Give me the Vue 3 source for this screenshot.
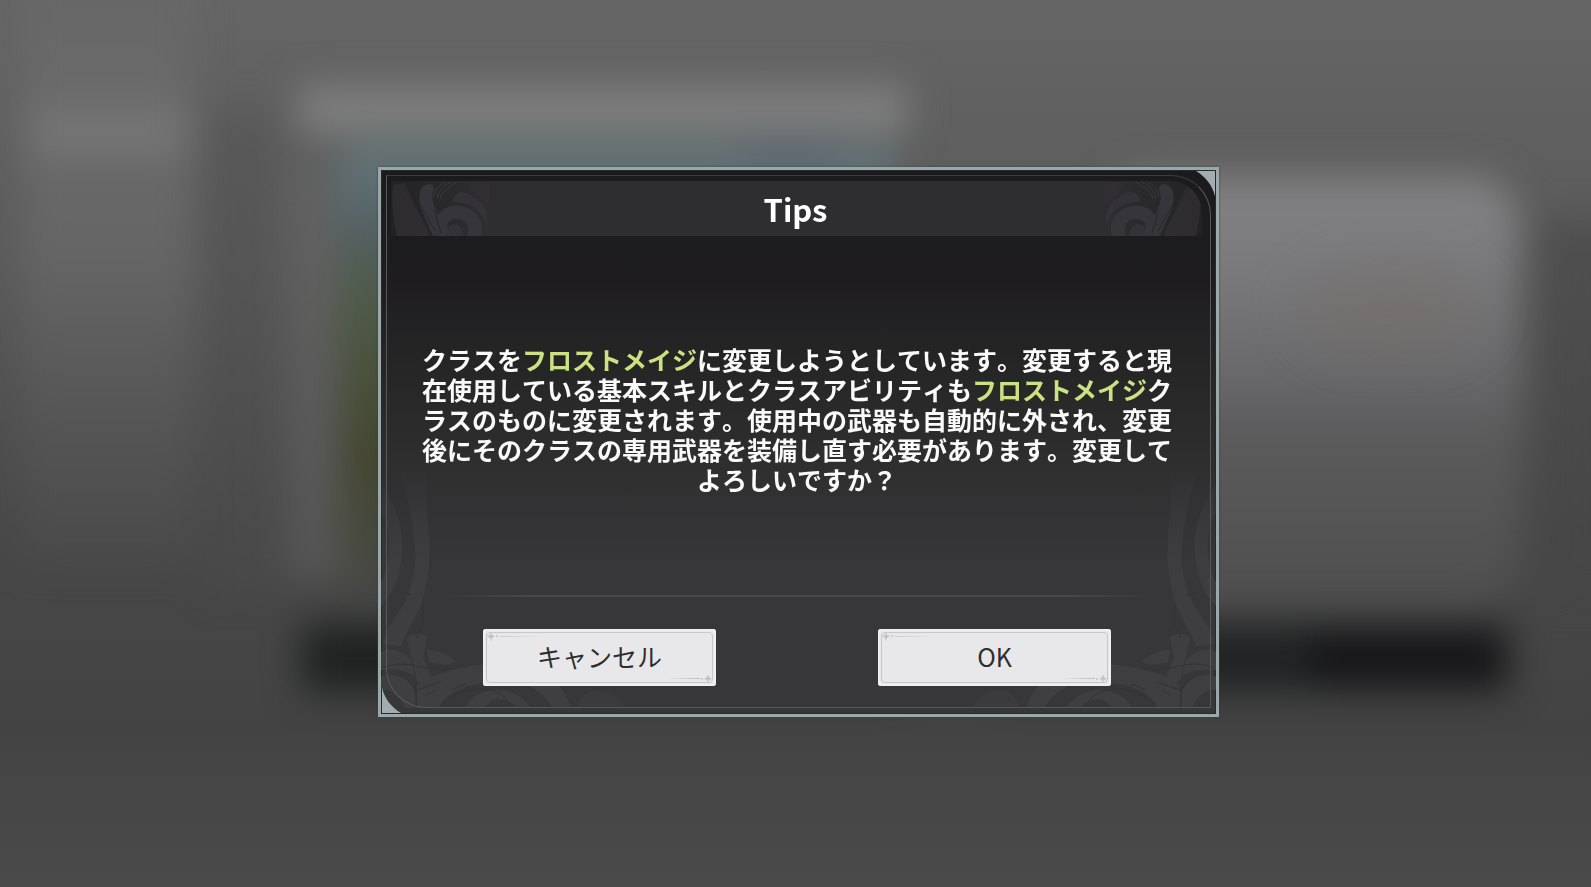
<script setup>
const className = 'フロストメイジ'
const actions = [
  { id: 'cancel', label: 'キャンセル' },
  { id: 'ok', label: 'OK' },
]
</script>

<template>
  <main class="screen">
    <!-- out-of-focus class screen behind the dialog -->
    <svg class="scene" viewBox="0 0 1591 887" preserveAspectRatio="none" aria-hidden="true">
      <defs>
        <linearGradient id="base" x1="0" y1="0" x2="0" y2="1">
          <stop offset="0" stop-color="#656565" />
          <stop offset=".3" stop-color="#5a5a5a" />
          <stop offset=".6" stop-color="#484848" />
          <stop offset=".82" stop-color="#434343" />
          <stop offset="1" stop-color="#4a4a4a" />
        </linearGradient>
        <linearGradient id="side" x1="0" y1="0" x2="0" y2="1">
          <stop offset="0" stop-color="#666666" />
          <stop offset=".25" stop-color="#6a6a6a" />
          <stop offset=".5" stop-color="#666666" />
          <stop offset=".75" stop-color="#575757" />
          <stop offset="1" stop-color="#4a4a4a" />
        </linearGradient>
        <linearGradient id="panel" x1="0" y1="0" x2="0" y2="1">
          <stop offset="0" stop-color="#838385" />
          <stop offset=".22" stop-color="#7a7a7c" />
          <stop offset=".45" stop-color="#6a6a6c" />
          <stop offset=".6" stop-color="#5b5b5c" />
          <stop offset="1" stop-color="#4f4f50" />
        </linearGradient>
        <linearGradient id="art" x1="0" y1="0" x2="0" y2="1">
          <stop offset="0" stop-color="#667979" />
          <stop offset=".12" stop-color="#5a6970" />
          <stop offset=".22" stop-color="#525e5c" />
          <stop offset=".38" stop-color="#4d5944" />
          <stop offset=".7" stop-color="#444630" />
          <stop offset="1" stop-color="#474943" />
        </linearGradient>
        <filter id="soft" x="-20%" y="-50%" width="140%" height="200%" color-interpolation-filters="sRGB">
          <feGaussianBlur stdDeviation="18" />
        </filter>
        <filter id="softer" x="-50%" y="-50%" width="200%" height="200%" color-interpolation-filters="sRGB">
          <feGaussianBlur stdDeviation="26" />
        </filter>
      </defs>
      <rect width="1591" height="887" fill="url(#base)" />
      <g filter="url(#soft)">
        <rect x="22" y="-60" width="170" height="620" fill="url(#side)" />
        <rect x="28" y="108" width="162" height="48" fill="#757575" />
        <rect x="206" y="110" width="70" height="480" fill="#4e4e4e" opacity=".4" />
        <rect x="286" y="170" width="60" height="410" fill="#666666" opacity=".5" />
        <rect x="340" y="146" width="554" height="436" fill="url(#art)" />
        <rect x="740" y="146" width="100" height="24" fill="#5b6c76" />
        <rect x="298" y="84" width="610" height="50" fill="#7e7e7e" />
        <rect x="1100" y="176" width="420" height="430" rx="50" fill="url(#panel)" />
        <rect x="302" y="624" width="600" height="68" fill="#202121" />
        <rect x="1000" y="624" width="508" height="68" fill="#222324" />
        <rect x="1310" y="634" width="196" height="50" fill="#161618" />
        <rect x="1536" y="220" width="90" height="380" fill="#464646" opacity=".6" />
      </g>
      <ellipse cx="1390" cy="310" rx="90" ry="44" fill="#756e6a" opacity=".5" filter="url(#softer)" />
    </svg>

    <section class="dialog" role="dialog" aria-modal="true" aria-labelledby="dialog-title" aria-describedby="dialog-text">
      <!-- scrollwork engraved along the lower corners -->
      <svg
        v-for="side in ['left', 'right']"
        :key="side"
        class="carving"
        :class="side"
        viewBox="0 0 270 260"
        aria-hidden="true"
      >
        <defs>
          <linearGradient :id="'carve-' + side" gradientUnits="userSpaceOnUse" x1="0" y1="10" x2="0" y2="260">
            <stop offset="0" stop-color="#3f3f42" stop-opacity="0" />
            <stop offset=".4" stop-color="#3f3f42" stop-opacity=".8" />
            <stop offset="1" stop-color="#3f3f42" />
          </linearGradient>
        </defs>
        <g :fill="'url(#carve-' + side + ')'">
          <path d="M18 18H46C44 40 46 60 48 84C50 110 46 130 40 150C34 166 26 176 20 192L2 190C4 180 8 172 14 164C30 142 36 118 34 92C32 64 26 38 18 18Z" />
          <path d="M0 30C18 54 24 82 20 108C17 128 10 142 0 152V128C10 112 12 76 0 58Z" />
          <path d="M26 184C32 178 40 180 46 182L42 204L50 222C48 230 38 232 36 226Z" />
          <path d="M46 196C58 196 70 202 74 208C66 212 56 210 48 208Z" />
          <path d="M0 198C10 192 22 198 30 206L34 222C22 214 10 216 0 216Z" />
          <path d="M36 232C60 214 90 212 124 208C160 208 180 226 190 254H172C158 232 140 226 120 228C90 228 66 236 58 254H36Z" />
          <path d="M84 254C94 232 132 228 150 254H136C126 242 110 242 104 254Z" />
          <path d="M0 222C16 218 30 226 34 238V254H24C18 240 8 234 0 236Z" />
          <path d="M196 254C202 232 230 228 244 254Z" opacity=".5" />
        </g>
        <g fill="none" stroke="#333336">
          <path d="M2 214C30 202 48 222 74 214M20 218L36 236L60 228M36 252L34 232M60 252C80 228 120 230 130 252M20 138L30 141M42 150V170L35 184M70 236L84 230L92 238M44 242L54 236" />
        </g>
      </svg>

      <span class="frame" aria-hidden="true"></span>
      <svg class="corner top-right" viewBox="0 0 19 25" aria-hidden="true">
        <path d="M0 0H19V25C16 14 10 6 0 0Z" fill="#a3adb1" />
      </svg>
      <svg class="corner bottom-left" viewBox="0 0 19 25" aria-hidden="true">
        <path d="M0 0V25H19C9 19 3 11 0 0Z" fill="#a3adb1" />
      </svg>

      <header class="heading">
        <svg
          v-for="side in ['left', 'right']"
          :key="side"
          class="flourish"
          :class="side"
          viewBox="0 0 100 55"
          aria-hidden="true"
        >
          <g fill="#363539">
            <path d="M2 4L14 2C20 18 32 36 38 55H6C2 38 0 20 2 4Z" opacity=".55" />
            <path d="M30 8C36 0 46 2 42 12C40 20 44 26 46 32L50 42L54 55H42C36 38 24 24 30 8Z" />
            <path d="M46 40C46 28 60 22 74 26C88 30 94 44 90 55H76C80 44 74 38 66 38C58 38 54 44 58 50L62 55H52C48 50 46 46 46 40Z" />
            <path d="M62 18C66 8 76 10 82 16C92 20 98 32 96 44C90 28 80 22 62 21Z" opacity=".8" />
            <path d="M78 2H98V24C90 18 80 12 78 2Z" opacity=".35" />
            <path d="M57 46C64 40 72 44 73 55H60Z" opacity=".8" />
          </g>
          <g fill="none" stroke="#3c3a3f">
            <path d="M46 18C48 8 54 4 60 1M49 18C51 10 58 6 66 1M43 16C44 8 50 3 54 1" />
          </g>
          <g fill="none" stroke="#29282b">
            <path d="M14 8L41 55M26 18L44 50M43 28L50 52" />
          </g>
        </svg>
        <h1 id="dialog-title">Tips</h1>
      </header>

      <div class="body">
        <p id="dialog-text">クラスを<em>{{ className }}</em>に変更しようとしています。変更すると現在使用している基本スキルとクラスアビリティも<em>{{ className }}</em>クラスのものに変更されます。使用中の武器も自動的に外され、変更後にそのクラスの専用武器を装備し直す必要があります。変更してよろしいですか？</p>
      </div>

      <hr class="rule" />

      <footer class="actions">
        <button v-for="action in actions" :key="action.id" type="button" class="action">
          <svg class="spark start" viewBox="0 0 56 9" aria-hidden="true">
            <defs>
              <linearGradient :id="'ray-' + action.id" x1="0" x2="1">
                <stop offset="0" stop-color="#b9b9bc" />
                <stop offset="1" stop-color="#b9b9bc" stop-opacity="0" />
              </linearGradient>
            </defs>
            <path d="M4 0L5 3L8 4L5 6L4 9L3 6L0 4L3 3Z" fill="#c3c3c6" />
            <circle cx="10" cy="4" r="1" fill="#c3c3c6" />
            <rect x="13" y="4" width="43" height="1" :fill="'url(#ray-' + action.id + ')'" opacity=".6" />
          </svg>
          <span>{{ action.label }}</span>
          <svg class="spark end" viewBox="0 0 56 9" aria-hidden="true">
            <path d="M4 0L5 3L8 4L5 6L4 9L3 6L0 4L3 3Z" fill="#c3c3c6" />
            <circle cx="10" cy="4" r="1" fill="#c3c3c6" />
            <rect x="12" y="4" width="32" height="1" :fill="'url(#ray-' + action.id + ')'" />
          </svg>
        </button>
      </footer>
    </section>
  </main>
</template>

<style>
body {
  margin: 0;
  background: #4a4a4a;
}
</style>

<style scoped>
.screen {
  position: relative;
  box-sizing: border-box;
  min-height: 100vh;
  padding: 16px 16px 20px 22px;
  display: flex;
  align-items: center;
  justify-content: center;
  overflow: hidden;
  font-family: "Noto Sans CJK JP", "Noto Sans", sans-serif;
}

.scene {
  position: absolute;
  inset: 0;
  width: 100%;
  height: 100%;
}

.dialog {
  position: relative;
  box-sizing: border-box;
  display: flex;
  flex-direction: column;
  width: 100%;
  max-width: 841px;
  min-height: 550px;
  border: 3px solid #9ba8a9;
  background: linear-gradient(#1b1b1d 0, #1e1c1f 110px, #242425 180px, #2f2f30 300px, #373739 400px, #373739 100%);
  box-shadow: inset 0 0 0 1px #232b2d, 0 0 2px #394142;
}

.frame {
  position: absolute;
  inset: 5px 5px 6px 5px;
  border: 1px solid #58585a;
  border-top-color: #403a3e;
  border-radius: 0 40px 0 40px;
}

.corner {
  position: absolute;
  width: 19px;
  height: 25px;
}

.corner.top-right {
  top: 1px;
  right: 1px;
}

.corner.bottom-left {
  bottom: 1px;
  left: 1px;
}

.carving {
  position: absolute;
  bottom: 0;
  width: 270px;
  height: 260px;
}

.carving.left {
  left: 0;
}

.carving.right {
  right: 0;
  transform: scaleX(-1);
}

.heading {
  position: relative;
  display: flex;
  align-items: center;
  justify-content: center;
  height: 55px;
  margin: 11px 14px 0 10px;
  overflow: hidden;
  border-top-right-radius: 32px;
  background: linear-gradient(90deg, #222124 0, #2e2d30 90px, #2e2d30 calc(100% - 90px), #222124 100%);
}

.flourish {
  position: absolute;
  top: 0;
  width: 100px;
  height: 55px;
}

.flourish.left {
  left: 0;
}

.flourish.right {
  right: 0;
  transform: scaleX(-1);
}

h1 {
  position: relative;
  margin: 0;
  padding: 2px 2px 0 0;
  color: #fff;
  font-size: 31px;
  font-weight: 700;
  line-height: 54px;
}

.body {
  position: relative;
  flex: 1;
  display: flex;
  align-items: center;
  justify-content: center;
  padding: 8px 34px 0 31px;
}

p {
  margin: 0;
  color: #fafafa;
  font-size: 25px;
  font-weight: 600;
  line-height: 30px;
  font-kerning: none;
  text-align: center;
}

em {
  color: #cbe283;
  font-style: normal;
}

.rule {
  position: relative;
  width: calc(100% - 130px);
  height: 2px;
  margin: 0 auto;
  border: 0;
  background: linear-gradient(90deg, transparent, #48484a 12%, #48484a 88%, transparent);
}

.actions {
  position: relative;
  display: flex;
  gap: 162px;
  padding: 32px 105px 28px 102px;
}

.action {
  position: relative;
  flex: 1;
  height: 57px;
  padding: 0 0 2px;
  border: 0;
  border-radius: 3px;
  background: #e8e8ea;
  box-shadow: inset 0 0 0 2px #efeff0;
  color: #2e2e30;
  font-family: inherit;
  font-size: 25px;
  font-weight: 400;
  line-height: 36px;
  cursor: pointer;
}

.action::before {
  content: "";
  position: absolute;
  inset: 3px;
  border: 1px solid #c8c8ca;
  border-radius: 4px;
}

.spark {
  position: absolute;
  width: 56px;
  height: 9px;
}

.spark.start {
  top: 3px;
  left: 4px;
}

.spark.end {
  right: 4px;
  bottom: 3px;
  transform: rotate(180deg);
}
</style>
